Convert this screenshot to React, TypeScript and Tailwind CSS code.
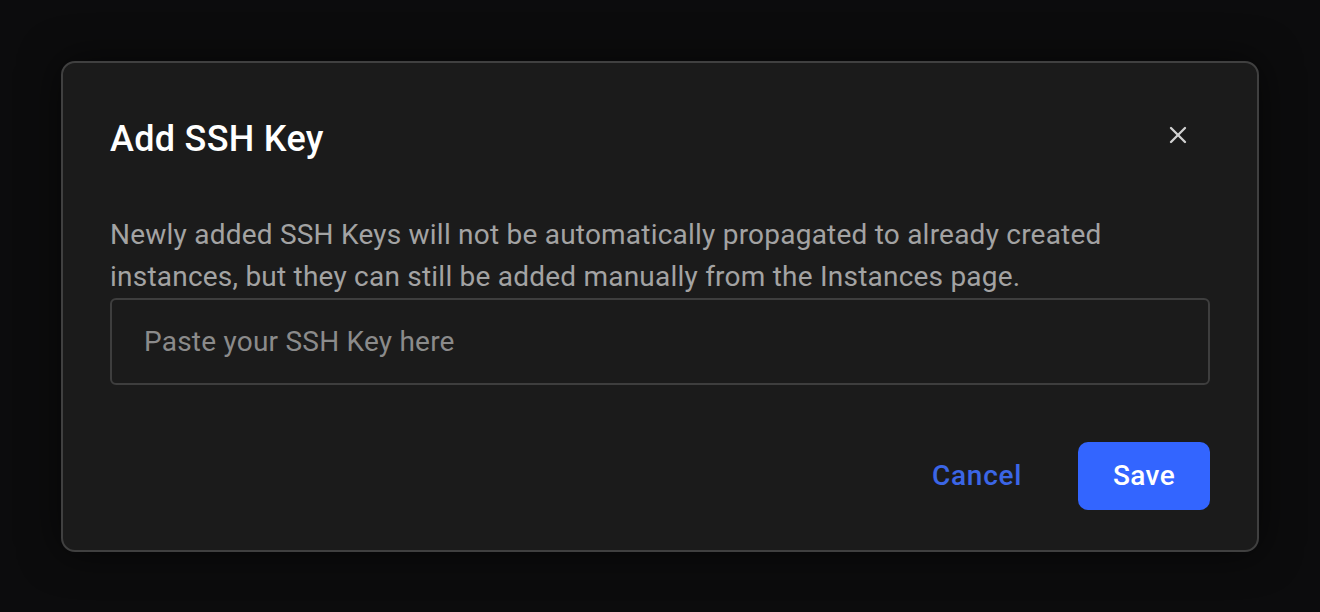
import { X } from "lucide-react";

export default function App() {
  return (
    <div
      className="w-[1320px] h-[612px] bg-[#0c0c0d] flex items-start justify-center pt-[61px]"
      style={{ fontFamily: "Roboto, 'Noto Sans', sans-serif" }}
    >
      {/* Dialog */}
      <div className="w-[1198px] h-[491px] bg-[#1b1b1b] border-2 border-[#404040] rounded-[14px] shadow-[0_0_40px_rgba(0,0,0,0.6)] px-[47px] pt-[52px] flex flex-col">
        <div className="flex items-start justify-between">
          <h2 className="text-[36px] leading-[48px] font-medium text-white tracking-[0.3px]">
            Add SSH Key
          </h2>
          <button className="mt-[6px] mr-[18px] text-[#d0d0d0]">
            <X className="w-[28px] h-[28px]" strokeWidth={2} />
          </button>
        </div>

        <p className="mt-[51px] text-[28px] leading-[42px] text-[#a3a3a3] tracking-[0.22px]">
          Newly added SSH Keys will not be automatically propagated to already created
          <br />
          instances, but they can still be added manually from the Instances page.
        </p>

        <input
          type="text"
          placeholder="Paste your SSH Key here"
          className="mt-0 h-[87px] w-full rounded-[6px] border-2 border-[#3e3e3e] bg-transparent px-[32px] text-[28px] text-white placeholder:text-[#8b8b8b] outline-none tracking-[0.22px]"
        />

        <div className="mt-[57px] flex items-center justify-end gap-[56px]">
          <button className="text-[28px] font-medium text-[#3b66e6] tracking-[0.7px]">
            Cancel
          </button>
          <button className="h-[68px] w-[132px] rounded-[10px] bg-[#3365ff] text-[28px] font-medium text-white tracking-[0.4px]">
            Save
          </button>
        </div>
      </div>
    </div>
  );
}
